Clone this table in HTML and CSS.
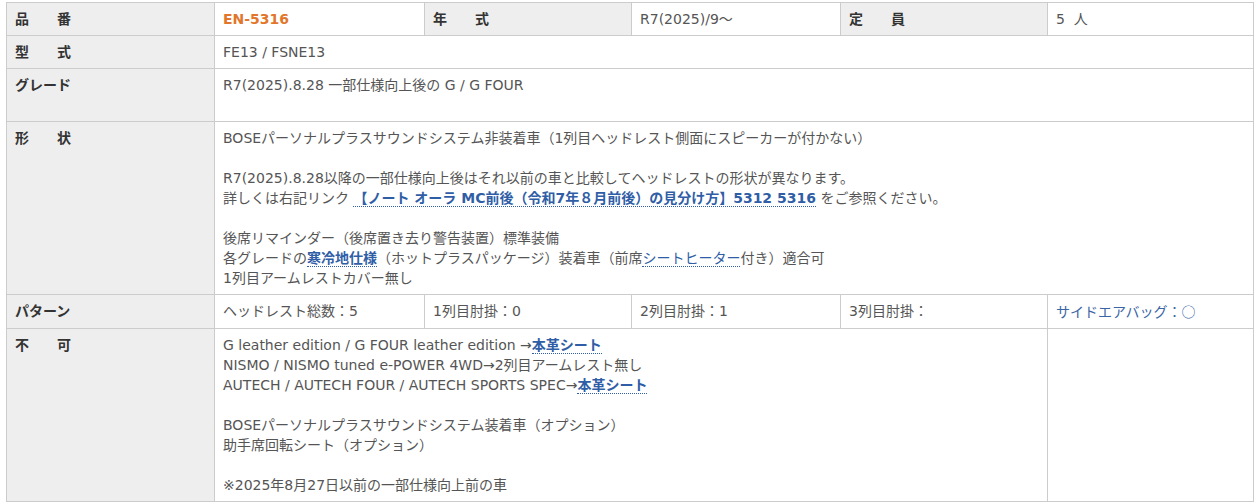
FILE: index.html
```html
<!DOCTYPE html>
<html lang="ja">
<head>
    <meta charset="UTF-8">
    <meta name="viewport" content="width=device-width, initial-scale=1.0">
    <title>EN-5316</title>
    <link rel="stylesheet" href="styles.css">
</head>
<body>
    <div class="spec-wrap">
        <table class="spec">
            <colgroup>
                <col class="c1">
                <col class="c2">
                <col class="c3">
                <col class="c4">
                <col class="c5">
                <col class="c6">
            </colgroup>
            <tbody>
                <tr>
                    <th>品　　番</th>
                    <td><span class="code">EN-5316</span></td>
                    <th>年　　式</th>
                    <td>R7(2025)/9〜</td>
                    <th>定　　員</th>
                    <td>5&nbsp;&nbsp;人</td>
                </tr>
                <tr>
                    <th>型　　式</th>
                    <td colspan="5">FE13 / FSNE13</td>
                </tr>
                <tr>
                    <th>グレード</th>
                    <td colspan="5">R7(2025).8.28 一部仕様向上後の G / G FOUR<br>&nbsp;</td>
                </tr>
                <tr>
                    <th>形　　状</th>
                    <td colspan="5">
                        BOSEパーソナルプラスサウンドシステム非装着車（1列目ヘッドレスト側面にスピーカーが付かない）<br>
                        <br>
                        R7(2025).8.28以降の一部仕様向上後はそれ以前の車と比較してヘッドレストの形状が異なります。<br>
                        詳しくは右記リンク <a class="link bold" href="#">【ノート オーラ MC前後（令和7年８月前後）の見分け方】5312 5316</a> をご参照ください。<br>
                        <br>
                        後席リマインダー（後席置き去り警告装置）標準装備<br>
                        各グレードの<a class="link bold" href="#">寒冷地仕様</a>（ホットプラスパッケージ）装着車（前席<a class="link" href="#">シートヒーター</a>付き）適合可<br>
                        1列目アームレストカバー無し
                    </td>
                </tr>
                <tr>
                    <th>パターン</th>
                    <td>ヘッドレスト総数：5</td>
                    <td>1列目肘掛：0</td>
                    <td>2列目肘掛：1</td>
                    <td>3列目肘掛：</td>
                    <td><span class="airbag">サイドエアバッグ：<span class="jp">○</span></span></td>
                </tr>
                <tr>
                    <th>不　　可</th>
                    <td colspan="4">
                        G leather edition / G FOUR leather edition →<a class="link bold" href="#">本革シート</a><br>
                        NISMO / NISMO tuned e-POWER 4WD→2列目アームレスト無し<br>
                        AUTECH / AUTECH FOUR / AUTECH SPORTS SPEC→<a class="link bold" href="#">本革シート</a><br>
                        <br>
                        BOSEパーソナルプラスサウンドシステム装着車（オプション）<br>
                        助手席回転シート（オプション）<br>
                        <br>
                        ※2025年8月27日以前の一部仕様向上前の車
                    </td>
                    <td></td>
                </tr>
            </tbody>
        </table>
    </div>
</body>
</html>
```
FILE: styles.css
```css
body {
    margin: 0;
    background-color: #fff;
    font-family: "DejaVu Sans", "Noto Sans CJK JP", sans-serif;
    font-size: 14px;
    color: #555;
}
.spec-wrap {
    padding: 2px 6px;
}
.spec {
    border-collapse: collapse;
    table-layout: fixed;
    width: 1248px;
}
.c1 { width: 208px; }
.c2 { width: 210px; }
.c3 { width: 207px; }
.c4 { width: 209px; }
.c5 { width: 207px; }
.c6 { width: 206px; }

.spec th,
.spec td {
    border: 1px solid #ccc;
    padding: 6px 8px;
    line-height: 20px;
    text-align: left;
    vertical-align: top;
    white-space: nowrap;
}
.spec th {
    background-color: #eee;
    color: #333;
    font-weight: bold;
}
.code {
    color: #e2762b;
    font-weight: bold;
}
.link {
    color: #2f5ea6;
    text-decoration: none;
    border-bottom: 1px dotted #2f5ea6;
}
.bold {
    font-weight: bold;
}
.airbag {
    color: #3a65a5;
}
.jp {
    font-family: "Noto Sans CJK JP", sans-serif;
}
```
